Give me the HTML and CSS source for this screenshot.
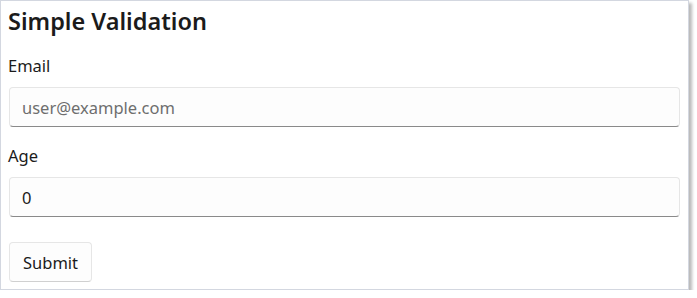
FILE: index.html
```html
<!DOCTYPE html>
<html lang="en">
<head>
    <meta charset="UTF-8">
    <meta name="viewport" content="width=device-width, initial-scale=1.0">
    <title>Simple Validation</title>
    <link rel="stylesheet" href="styles.css">
</head>
<body>

    <div class="window">
        <h1 class="page-title">Simple Validation</h1>

        <!-- Campo de correo -->
        <div class="field">
            <label for="email">Email</label>
            <input type="text" id="email" placeholder="user@example.com">
        </div>

        <!-- Campo de edad -->
        <div class="field">
            <label for="age">Age</label>
            <input type="text" id="age" value="0">
        </div>

        <div class="button-row">
            <button type="button">Submit</button>
        </div>
    </div>

</body>
</html>
```

FILE: styles.css
```css
body {
    margin: 0;
    padding: 0;
    background-color: #fff;
    font-family: "Noto Sans", "Open Sans", sans-serif;
    color: #1b1b1b;
}

.window {
    width: 689px;
    height: 290px;
    box-sizing: border-box;
    border: 1px solid #d3d7e0;
    background-color: #fff;
    box-shadow: 3px 3px 3px rgba(0, 0, 0, 0.28);
    padding: 4px 8px 0 8px;
}

.page-title {
    margin: 0 0 0 -1px;
    font-size: 23.5px;
    font-weight: 600;
    line-height: 32px;
}

.field {
    display: flex;
    flex-direction: column;
}

.field label {
    font-size: 16.5px;
    line-height: 22px;
    margin: 18px 0 10px -1px;
}

.field input {
    height: 40px;
    box-sizing: border-box;
    border: 1px solid #e6e6e6;
    border-bottom: 1px solid #8a8a8a;
    border-radius: 4px;
    background-color: #fdfdfd;
    padding: 0 12px;
    font-family: inherit;
    font-size: 16.5px;
    color: #1b1b1b;
    outline: none;
}

.field input::placeholder {
    color: #6e6e6e;
}

.button-row {
    margin-top: 25px;
}

button {
    height: 40px;
    padding: 0 13px;
    border: 1px solid #e6e6e6;
    border-bottom-color: #d0d0d0;
    border-radius: 4px;
    background-color: #fdfdfd;
    font-family: inherit;
    font-size: 16.5px;
    color: #1b1b1b;
    cursor: pointer;
}
```
